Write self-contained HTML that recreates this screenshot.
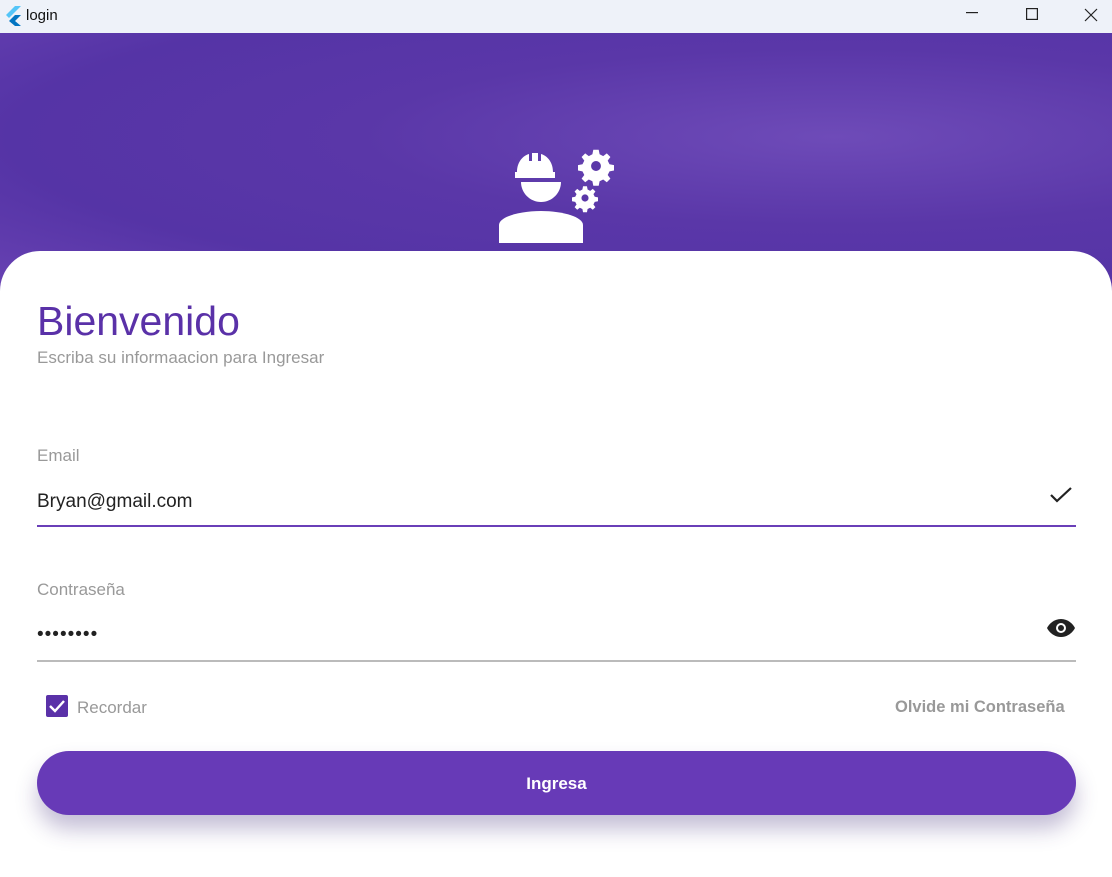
<!DOCTYPE html>
<html><head><meta charset="utf-8"><style>
*{margin:0;padding:0;box-sizing:border-box}
body{width:1112px;height:877px;overflow:hidden;background:#fff;font-family:"Liberation Sans",sans-serif;position:relative}
.tb{position:absolute;left:0;top:0;width:1112px;height:33px;background:#eef2f9}
.tb .t{position:absolute;left:26px;top:7px;font-size:15px;color:#111}
.hd{position:absolute;left:0;top:33px;width:1112px;height:260px;background:radial-gradient(ellipse at 75% 40%,#6e4bb8 0%,#5a37a8 40%,#5534a6 70%,#6a43b4 100%)}
.card{position:absolute;left:0;top:251px;width:1112px;height:626px;background:#fff;border-radius:40px 40px 0 0}
.abs{position:absolute}
</style></head><body>
<div class="tb">
<svg class="abs" style="left:4px;top:6px" width="18" height="20" viewBox="0 0 18 20"><path d="M11 0h6L5 12 2 9z" fill="#54c5f8"/><path d="M11 9h6l-6 6 6 5h-6l-6-5z" fill="#0175c2"/></svg>
<span class="t">login</span>
<svg class="abs" style="left:966px;top:12px" width="12" height="2"><rect width="12" height="1.2" fill="#222"/></svg>
<svg class="abs" style="left:1026px;top:8px" width="12" height="12"><rect x=".6" y=".6" width="10.8" height="10.8" fill="none" stroke="#222" stroke-width="1.2"/></svg>
<svg class="abs" style="left:1084px;top:8px" width="14" height="14"><path d="M1 1L13 13M13 1L1 13" stroke="#222" stroke-width="1.2"/></svg>
</div>
<div class="hd"></div>
<svg class="abs" style="left:495px;top:145px" width="125" height="100" viewBox="495 145 125 100">
<g fill="#fff">
<path d="M517 172c0-9 5-16 12-18v7h3v-8h6v8h3v-7c7 2 12 9 12 18h2v6h-40v-6z"/>
<path d="M521 182h40c0 11-9 20-20 20s-20-9-20-20z"/>
<path d="M499 243v-18c0-8 20-14 42-14s42 6 42 14v18z"/>
<g transform="translate(596,166) scale(0.9)"><path d="M-3-18h6l1 5 4 2 4-3 4 4-3 4 2 4 5 1v6l-5 1-2 4 3 4-4 4-4-3-4 2-1 5h-6l-1-5-4-2-4 3-4-4 3-4-2-4-5-1v-6l5-1 2-4-3-4 4-4 4 3 4-2z"/><circle r="5.5" fill="#5a37a8"/></g>
<g transform="translate(585,198) scale(0.65)"><path d="M-3-18h6l1 5 4 2 4-3 4 4-3 4 2 4 5 1v6l-5 1-2 4 3 4-4 4-4-3-4 2-1 5h-6l-1-5-4-2-4 3-4-4 3-4-2-4-5-1v-6l5-1 2-4-3-4 4-4 4 3 4-2z"/><circle r="5.5" fill="#5a37a8"/></g>
</g></svg>
<div class="card"></div>
<div class="abs" style="left:37px;top:298px;font-size:41px;color:#5a31a8;font-weight:500">Bienvenido</div>
<div class="abs" style="left:37px;top:348px;font-size:17px;color:#999">Escriba su informaacion para Ingresar</div>
<div class="abs" style="left:37px;top:446px;font-size:17px;color:#999">Email</div>
<div class="abs" style="left:37px;top:491px;font-size:19px;color:#222">Bryan@gmail.com</div>
<svg class="abs" style="left:1049px;top:486px" width="24" height="18"><path d="M2 9l6 6L22 2" stroke="#222" stroke-width="2.2" fill="none"/></svg>
<div class="abs" style="left:37px;top:525px;width:1039px;height:2px;background:#6a3fb8"></div>
<div class="abs" style="left:37px;top:580px;font-size:17px;color:#999">Contraseña</div>
<div class="abs" style="left:37px;top:624px;font-size:19px;color:#222;letter-spacing:1px">••••••••</div>
<svg class="abs" style="left:1047px;top:618px" width="28" height="20" viewBox="0 0 28 20"><path d="M14 1C7 1 2 6 0 10c2 4 7 9 14 9s12-5 14-9C26 6 21 1 14 1z" fill="#222"/><circle cx="14" cy="10" r="5" fill="#fff"/><circle cx="14" cy="10" r="3" fill="#222"/></svg>
<div class="abs" style="left:37px;top:660px;width:1039px;height:1.5px;background:#bbb"></div>
<div class="abs" style="left:46px;top:695px;width:22px;height:22px;background:#5a31a8;border-radius:2px"><svg width="22" height="22"><path d="M4 11l5 5 9-10" stroke="#fff" stroke-width="2.4" fill="none"/></svg></div>
<div class="abs" style="left:77px;top:698px;font-size:17px;color:#999">Recordar</div>
<div class="abs" style="left:895px;top:698px;font-size:16.5px;color:#999;font-weight:bold">Olvide mi Contraseña</div>
<div class="abs" style="left:37px;top:751px;width:1039px;height:64px;background:#673ab7;border-radius:32px;box-shadow:0 14px 22px rgba(60,40,120,.3);color:#fff;font-weight:bold;font-size:17px;text-align:center;line-height:66px">Ingresa</div>
</body></html>
